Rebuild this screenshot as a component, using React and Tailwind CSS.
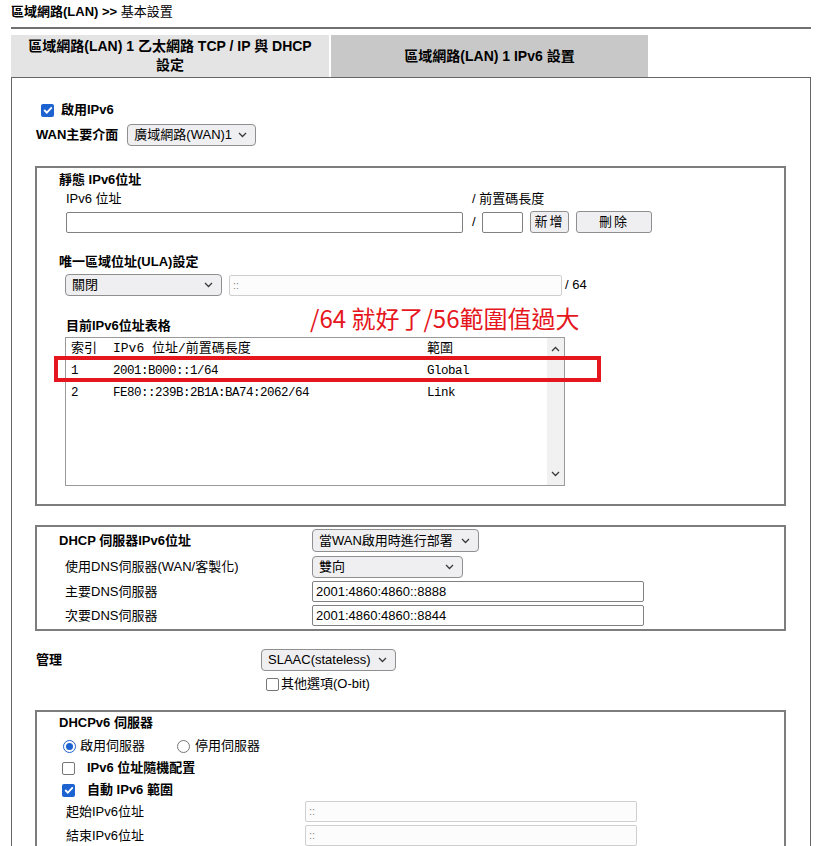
import React from "react";

const Chevron = ({ up }) => (
  <svg width="9" height="6" viewBox="0 0 9 6" className="shrink-0">
    <path d={up ? "M1 5l3.5-3.5L8 5" : "M1 1l3.5 3.5L8 1"} stroke="#3a3a3a" strokeWidth="1.3" fill="none" />
  </svg>
);

const Select = ({ value, w, h = "h-[22px]" }) => (
  <div className={`flex ${w} ${h} shrink-0 items-center justify-between rounded-[4px] border border-[#8f8f8f] bg-[#efeff1] pl-[6px] pr-[8px]`}>
    <span className="whitespace-nowrap">{value}</span>
    <Chevron />
  </div>
);

const Input = ({ w, value, disabled }) => (
  <div
    className={`flex h-[21px] ${w} shrink-0 items-center rounded-[2px] border px-[3px] ${
      disabled ? "border-[#cfcfcf] bg-[#fcfcfc] text-[11px] text-[#8a8a8a]" : "border-[#808080] bg-white"
    }`}
  >
    {value}
  </div>
);

const Check = ({ on }) =>
  on ? (
    <span className="flex h-[13px] w-[13px] shrink-0 items-center justify-center rounded-[2px] bg-[#1c62d0]">
      <svg width="10" height="8" viewBox="0 0 10 8">
        <path d="M1.2 4l2.6 2.6L8.8 1.4" stroke="#fff" strokeWidth="1.8" fill="none" />
      </svg>
    </span>
  ) : (
    <span className="h-[13px] w-[13px] shrink-0 rounded-[2px] border border-[#767676] bg-white" />
  );

const Radio = ({ on }) =>
  on ? (
    <span className="flex h-[13px] w-[13px] shrink-0 items-center justify-center rounded-full border-[1.5px] border-[#1c62d0] bg-white">
      <span className="h-[7px] w-[7px] rounded-full bg-[#1c62d0]" />
    </span>
  ) : (
    <span className="h-[13px] w-[13px] shrink-0 rounded-full border border-[#767676] bg-white" />
  );

const Button = ({ w, children }) => (
  <div className={`flex h-[22px] ${w} items-center justify-center rounded-[3px] border border-[#8f8f8f] bg-[#efeff1] tracking-[2px]`}>
    {children}
  </div>
);

const rows = [
  ["1", "2001:B000::1/64", "Global"],
  ["2", "FE80::239B:2B1A:BA74:2062/64", "Link"],
];

export default function App() {
  return (
    <div className="relative h-[846px] w-[832px] overflow-hidden bg-white font-['Liberation_Sans','Noto_Sans_CJK_TC',sans-serif] text-[13px] text-black">
      <div className="h-[21px] pl-[11px] pt-[3px] leading-[18px]">
        <span className="font-bold">區域網路(LAN) &gt;&gt;</span> 基本設置
      </div>
      <div className="ml-[11px] mt-[6px] w-[800px] border-t-2 border-[#707070]" />

      <div className="ml-[11px] mt-[6px] flex h-[42px] gap-[2px]">
        <div className="flex w-[318px] flex-col items-center justify-center bg-[#e4e4e4] text-[14px] font-bold leading-[19px]">
          <span>區域網路(LAN) 1 乙太網路 TCP / IP 與 DHCP</span>
          <span>設定</span>
        </div>
        <div className="flex w-[317px] items-center justify-center bg-[#c8c8c8] text-[14px] font-bold">
          區域網路(LAN) 1 IPv6 設置
        </div>
      </div>

      <div className="ml-[11px] w-[800px] border border-b-0 border-[#666] pb-[40px]">
        <div className="ml-[29px] mt-[23px] flex h-[18px] items-center gap-[7px]">
          <Check on />
          <span className="font-bold">啟用IPv6</span>
        </div>
        <div className="ml-[24px] mt-[5px] flex items-center gap-[9px]">
          <span className="font-bold">WAN主要介面</span>
          <Select value="廣域網路(WAN)1" w="w-[129px]" />
        </div>

        {/* static ipv6 */}
        <div className="ml-[23px] mt-[20px] w-[751px] border-2 border-[#7d7d7d] pb-[18px]">
          <div className="ml-[22px] mt-[3px] h-[18px] font-bold leading-[18px]">靜態 IPv6位址</div>
          <div className="ml-[29px] mt-[1px] flex h-[18px] items-center">
            <span className="w-[406px]">IPv6 位址</span>
            <span>/ 前置碼長度</span>
          </div>
          <div className="ml-[29px] mt-[3px] flex items-center">
            <Input w="w-[397px]" />
            <span className="ml-[9px] w-[10px]">/</span>
            <Input w="w-[41px]" />
            <div className="ml-[7px]">
              <Button w="w-[39px]">新增</Button>
            </div>
            <div className="ml-[7px]">
              <Button w="w-[76px]">刪除</Button>
            </div>
          </div>

          <div className="ml-[22px] mt-[20px] h-[18px] font-bold leading-[18px]">唯一區域位址(ULA)設定</div>
          <div className="ml-[28px] mt-[3px] flex items-center">
            <Select value="關閉" w="w-[157px]" />
            <div className="ml-[7px]">
              <Input w="w-[333px]" value="::" disabled />
            </div>
            <span className="ml-[3px]">/ 64</span>
          </div>

          <div className="ml-[29px] mt-[21px] h-[18px] font-bold leading-[18px]">目前IPv6位址表格</div>
          <div className="ml-[28px] mt-[2px] flex h-[149px] w-[500px] border border-[#9a9a9a]">
            <div className="flex-1 pl-[5px] font-['Liberation_Mono','Noto_Sans_CJK_TC',monospace] text-[12.5px] tracking-[-0.5px]">
              <div className="flex h-[22px] items-center text-[13px] tracking-normal">
                <span className="w-[42px]">索引</span>
                <span className="w-[314px]">IPv6 位址/前置碼長度</span>
                <span>範圍</span>
              </div>
              {rows.map((r, i) => (
                <div key={i} className="flex h-[22px] items-center">
                  <span className="w-[42px]">{r[0]}</span>
                  <span className="w-[314px]">{r[1]}</span>
                  <span>{r[2]}</span>
                </div>
              ))}
            </div>
            <div className="flex w-[17px] flex-col items-center justify-between bg-[#f1f1f1] py-[8px]">
              <Chevron up />
              <Chevron />
            </div>
          </div>
        </div>

        {/* dhcp server */}
        <div className="ml-[23px] mt-[19px] flex w-[751px] flex-col gap-[3px] border-2 border-[#7d7d7d] pb-[3px] pt-[2px]">
          <div className="flex items-center">
            <span className="w-[275px] pl-[22px] font-bold">DHCP 伺服器IPv6位址</span>
            <Select value="當WAN啟用時進行部署" w="w-[167px]" h="h-[23px]" />
          </div>
          <div className="mt-[1px] flex items-center">
            <span className="w-[275px] pl-[28px]">使用DNS伺服器(WAN/客製化)</span>
            <Select value="雙向" w="w-[151px]" />
          </div>
          <div className="flex items-center">
            <span className="w-[275px] pl-[28px]">主要DNS伺服器</span>
            <Input w="w-[332px]" value="2001:4860:4860::8888" />
          </div>
          <div className="flex items-center">
            <span className="w-[275px] pl-[28px]">次要DNS伺服器</span>
            <Input w="w-[332px]" value="2001:4860:4860::8844" />
          </div>
        </div>

        <div className="ml-[24px] mt-[18px] flex items-center">
          <span className="w-[225px] font-bold">管理</span>
          <Select value="SLAAC(stateless)" w="w-[135px]" />
        </div>
        <div className="ml-[254px] mt-[5px] flex h-[16px] items-center gap-[2px]">
          <Check />
          <span>其他選項(O-bit)</span>
        </div>

        {/* dhcpv6 */}
        <div className="ml-[23px] mt-[18px] w-[751px] border-2 border-b-0 border-[#7d7d7d] pb-[10px] pt-[2px]">
          <div className="ml-[22px] h-[18px] font-bold leading-[18px]">DHCPv6 伺服器</div>
          <div className="ml-[26px] mt-[5px] flex h-[18px] items-center">
            <Radio on />
            <span className="ml-[4px] w-[97px]">啟用伺服器</span>
            <Radio />
            <span className="ml-[5px]">停用伺服器</span>
          </div>
          <div className="ml-[25px] mt-[4px] flex h-[18px] items-center">
            <Check />
            <span className="ml-[12px] font-bold">IPv6 位址隨機配置</span>
          </div>
          <div className="ml-[25px] mt-[4px] flex h-[18px] items-center">
            <Check on />
            <span className="ml-[12px] font-bold">自動 IPv6 範圍</span>
          </div>
          <div className="mt-[2px] flex items-center">
            <span className="w-[268px] pl-[29px]">起始IPv6位址</span>
            <Input w="w-[332px]" value="::" disabled />
          </div>
          <div className="mt-[3px] flex items-center">
            <span className="w-[268px] pl-[29px]">結束IPv6位址</span>
            <Input w="w-[332px]" value="::" disabled />
          </div>
        </div>
      </div>

      {/* annotation */}
      <div className="absolute left-[310px] top-[302px] whitespace-nowrap font-['Noto_Sans_CJK_TC',sans-serif] text-[24px] leading-[32px] text-[#e5161d]">
        /64 就好了/56範圍值過大
      </div>
      <div className="absolute left-[54px] top-[356px] h-[26px] w-[547px] border-4 border-[#e5161d]" />
    </div>
  );
}
